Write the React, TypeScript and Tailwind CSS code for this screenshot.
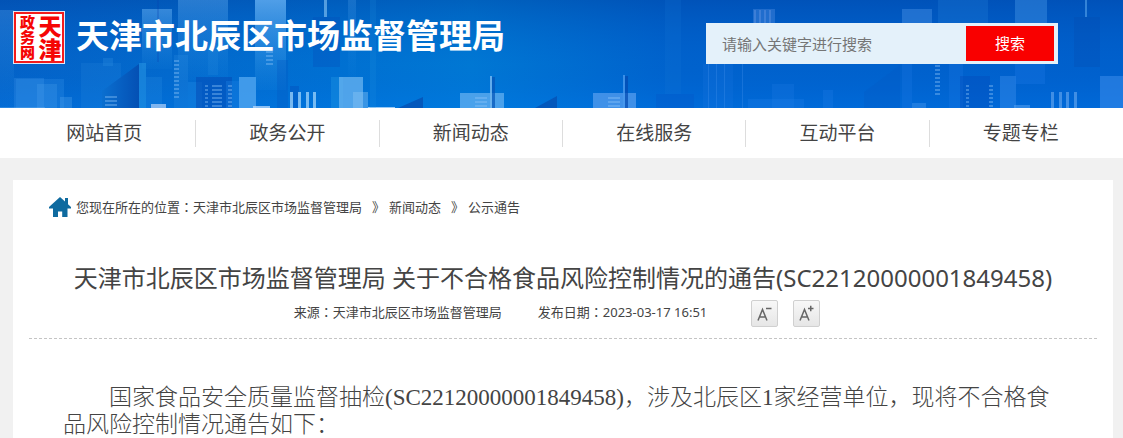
import { useState } from 'react';

const navItems = ['网站首页', '政务公开', '新闻动态', '在线服务', '互动平台', '专题专栏'];

const crumbs = ['天津市北辰区市场监督管理局', '新闻动态', '公示通告'];

// x, y, width, height, fill, opacity
const towers: [number, number, number, number, string, number][] = [
  [0, 10, 14, 98, 'url(#haze)', 0.3],
  [14, 78, 30, 30, '#4da0f0', 0.25],
  [16, 79, 48, 29, '#3d96ec', 0.25],
  [37, 84, 20, 24, '#5fb0f5', 0.2],
  [0, 107, 45, 1, '#7fc0fa', 0.3],
  [60, 97, 12, 11, '#5aa8f0', 0.3],
  [81, 63, 40, 45, '#2f8de0', 0.2],
  [103, 58, 10, 8, '#2f8de0', 0.3],
  [139, 63, 7, 45, '#2ea0e8', 0.45],
  [146, 77, 16, 31, '#2b90e4', 0.25],
  [142, 9, 30, 60, 'url(#haze)', 0.6],
  [157, 0, 2, 62, '#063fae', 0.25],
  [151, 104, 15, 4, '#a8cbf5', 0.75],
  [174, 55, 14, 53, '#3a94e6', 0.2],
  [178, 0, 50, 80, 'url(#haze)', 0.45],
  [188, 82, 14, 26, '#1f86e0', 0.4],
  [196, 77, 36, 31, '#0348b4', 0.5],
  [208, 45, 10, 30, '#2f92e2', 0.2],
  [226, 81, 13, 27, '#1a7ee0', 0.4],
  [239, 77, 17, 31, '#55a9f2', 0.75],
  [253, 106, 17, 2, '#b0d4fa', 0.8],
  [255, 0, 31, 90, 'url(#haze)', 0.9],
  [277, 60, 11, 48, '#0358c4', 0.35],
  [290, 86, 9, 22, '#0348b8', 0.35],
  [324, 0, 3, 17, '#8cc8f5', 0.6],
  [313, 17, 27, 50, '#034cb8', 0.3],
  [331, 77, 12, 31, '#1d96e4', 0.4],
  [339, 77, 24, 31, '#6ab4f0', 0.75],
  [353, 92, 15, 16, '#8cc6f5', 0.4],
  [368, 107, 27, 1, '#bfe0fb', 0.8],
  [348, 0, 8, 77, 'url(#haze)', 0.25],
  [370, 0, 6, 108, '#2b9ce6', 0.15],
  [460, 93, 44, 15, '#6ab4f2', 0.7],
  [490, 76, 2, 32, '#6cb2ee', 0.9],
  [492, 77, 3, 31, '#0454b8', 0.7],
  [593, 93, 43, 15, '#5a9ff0', 0.7],
  [623, 75, 2, 33, '#4a98ec', 0.8],
  [625, 76, 3, 32, '#0348b0', 0.7],
  [656, 94, 38, 14, '#0550c4', 0.25],
  [665, 0, 16, 94, '#1579da', 0.18],
  [703, 64, 30, 44, '#2a80ea', 0.15],
  [753, 9, 22, 15, '#3a80d8', 0.55],
  [772, 84, 22, 24, '#2a80ea', 0.2],
  [748, 99, 56, 9, '#2f88ee', 0.2],
  [823, 90, 10, 18, '#2f88ee', 0.2],
  [902, 9, 30, 15, '#3a86de', 0.55],
  [902, 64, 10, 44, '#1e7ce8', 0.25],
  [912, 103, 14, 5, '#4a98ee', 0.4],
  [938, 0, 50, 23, '#1e78d4', 0.35],
  [949, 64, 14, 44, '#1e7ce8', 0.25],
  [960, 76, 30, 32, '#0348b8', 0.35],
  [1000, 76, 16, 32, '#3f90ee', 0.4],
  [1015, 0, 32, 23, '#3a8cdf', 0.5],
  [1015, 64, 30, 20, '#1e7ce8', 0.3],
  [1014, 105, 16, 3, '#5ea6f2', 0.5],
  [1074, 17, 26, 50, '#0348ac', 0.25],
  [1085, 0, 2, 17, '#4a98e4', 0.7],
  [1100, 76, 23, 32, '#3f90ee', 0.5],
];

// columns of lit windows: x, y, width, rows
const windows: [number, number, number, number][] = [
  [174, 60, 5, 10],
  [205, 85, 3, 6],
  [212, 85, 10, 6],
  [228, 85, 4, 6],
  [266, 51, 7, 4],
  [105, 96, 12, 3],
  [475, 97, 12, 3],
  [608, 97, 12, 3],
  [935, 65, 5, 8],
  [966, 85, 3, 6],
  [989, 85, 4, 6],
];

function Skyline() {
  return (
    <svg
      className="absolute inset-0 h-full w-full"
      viewBox="0 0 1123 108"
      preserveAspectRatio="none"
      aria-hidden="true"
    >
      <defs>
        <linearGradient id="sky" x1="0" x2="1" y1="0" y2="0">
          <stop offset="0" stopColor="#0462c6" />
          <stop offset="0.3" stopColor="#0072d2" />
          <stop offset="0.42" stopColor="#007ad4" />
          <stop offset="0.6" stopColor="#0062cc" />
          <stop offset="1" stopColor="#0060cc" />
        </linearGradient>
        <linearGradient id="shade" x1="0" x2="0" y1="0" y2="1">
          <stop offset="0" stopColor="#003c9c" stopOpacity="0.4" />
          <stop offset="0.6" stopColor="#0060d0" stopOpacity="0.1" />
          <stop offset="1" stopColor="#0078ec" stopOpacity="0.4" />
        </linearGradient>
        <linearGradient id="haze" x1="0" x2="0" y1="0" y2="1">
          <stop offset="0" stopColor="#62aef2" stopOpacity="0.9" />
          <stop offset="1" stopColor="#2f98e8" stopOpacity="0.1" />
        </linearGradient>
        <linearGradient id="roof" x1="0" x2="1" y1="0" y2="0">
          <stop offset="0" stopColor="#0a6fd0" />
          <stop offset="1" stopColor="#0450b4" />
        </linearGradient>
      </defs>
      <rect width="1123" height="108" fill="url(#sky)" />
      <rect width="1123" height="108" fill="url(#shade)" />
      {towers.map(([x, y, w, h, fill, opacity], i) => (
        <rect key={i} x={x} y={y} width={w} height={h} fill={fill} opacity={opacity} />
      ))}
      <path d="M102 108V91L139 64V108Z" fill="url(#roof)" />
      <path d="M398 108L423 97V108Z" fill="#0458bc" />
      <path d="M535 108L557 96V108Z" fill="#0458bc" />
      <path d="M864 108V92L900 65V108Z" fill="#0458c4" opacity="0.3" />
      {windows.map(([x, y, w, rows]) =>
        Array.from({ length: rows }, (_, r) => (
          <rect key={`${x}-${r}`} x={x} y={y + r * 4} width={w} height="2" fill="#8cc4f8" opacity="0.4" />
        ))
      )}
      {[290, 298, 306, 313].map((x) => (
        <rect key={x} x={x} y="92" width="3" height="16" fill="#9fd4fb" opacity="0.75" />
      ))}
      {[1051, 1059, 1066, 1074].map((x) => (
        <rect key={x} x={x} y="92" width="3" height="16" fill="#7fb8f6" opacity="0.5" />
      ))}
      {[754, 759, 764, 769].map((x) => (
        <rect key={x} x={x} y="10" width="2" height="14" fill="#5a90e0" opacity="0.5" />
      ))}
      {[708, 716, 724, 742].map((x) => (
        <rect key={x} x={x} y="64" width="1" height="44" fill="#4a94ee" opacity="0.3" />
      ))}
    </svg>
  );
}

function Seal() {
  return (
    <div className="h-[53px] w-[52px] shrink-0 bg-[#dce8f8] p-px">
      <div className="flex h-full flex-row-reverse items-center justify-center border-2 border-[#f31c1c] bg-white font-black whitespace-nowrap text-[#f50505]">
        <span className="text-[23px] leading-6 [writing-mode:vertical-rl]">天津</span>
        <span className="text-[15px] leading-5 [writing-mode:vertical-rl]">政务网</span>
      </div>
    </div>
  );
}

function HomeIcon() {
  return (
    <svg className="h-5 w-[22px] shrink-0" viewBox="0 0 22 20" fill="#0e6a9f" aria-hidden="true">
      <path d="M11 0L16 4.4V1H19V7.2L22 10V11.5H18.5V20H13.2V14.5H9V20H4V11.5H0V10Z" />
    </svg>
  );
}

// full-width colon, centred in its box
function Colon() {
  return <span className="font-['Noto_Sans_CJK_TC',sans-serif] leading-none">：</span>;
}

function FontSizeButton({ sign, label, onClick }: { sign: '-' | '+'; label: string; onClick: () => void }) {
  return (
    <button
      type="button"
      aria-label={label}
      onClick={onClick}
      className="h-[27px] w-[27px] rounded-xs border border-[#d0d0d0] bg-gradient-to-b from-[#f8f8f8] to-[#e6e6e6]"
    >
      <svg viewBox="0 0 25 25" fill="none" stroke="#666" strokeWidth="1.5" aria-hidden="true">
        <path d="M6 19.5L10.5 8.5L15 19.5M7.5 16H13.5" />
        <path d={sign === '+' ? 'M14 7.5H19.5M16.75 4.75V10.25' : 'M14 7.5H19.5'} />
      </svg>
    </button>
  );
}

export default function App() {
  const [keyword, setKeyword] = useState('');
  const [large, setLarge] = useState(false);

  return (
    <div className="min-h-screen bg-[#f1f1f1] font-['Noto_Sans','Noto_Sans_CJK_SC',sans-serif] text-[#444]">
      {/* Header */}
      <header className="relative h-[108px] overflow-hidden bg-[#0068cc]">
        <Skyline />
        <div className="relative flex items-start justify-between pt-[11px] pr-[65px] pl-[13px]">
          <div className="flex items-start gap-[11px]">
            <Seal />
            <span className="text-[33px] leading-[50px] font-bold whitespace-nowrap text-white">
              天津市北辰区市场监督管理局
            </span>
          </div>
          <form
            className="mt-3 flex h-[41px] w-[352px] items-center bg-[#e4f1fa] pr-1"
            onSubmit={(e) => e.preventDefault()}
          >
            <input
              type="text"
              aria-label="搜索关键字"
              placeholder="请输入关键字进行搜索"
              value={keyword}
              onChange={(e) => setKeyword(e.target.value)}
              className="h-full min-w-0 flex-1 bg-transparent px-4 text-[15px] outline-none placeholder:text-[#757575]"
            />
            <button type="submit" className="h-[35px] w-[88px] bg-[#f90000] text-[15px] text-white">
              搜索
            </button>
          </form>
        </div>
      </header>

      {/* Navigation */}
      <nav className="bg-white pr-[11px] pl-[13px]">
        <ul className="flex h-[50px] items-center">
          {navItems.map((item) => (
            <li key={item} className="flex-1 border-r border-[#ddd] text-center last:border-r-0">
              <a href="#" className="text-[19px] leading-[27px]">
                {item}
              </a>
            </li>
          ))}
        </ul>
      </nav>

      {/* Article */}
      <main className="mt-[22px] mr-[10px] ml-[13px] bg-white px-4">
        <div className="flex h-[54px] items-center pl-5 text-[13px] leading-5">
          <HomeIcon />
          <span className="ml-[5px]">
            您现在所在的位置
            <Colon />
          </span>
          {crumbs.map((crumb, i) => (
            <span key={crumb} className="flex">
              {i > 0 && <span className="mr-1 ml-[10px]">》</span>}
              <a href="#">{crumb}</a>
            </span>
          ))}
        </div>

        <h1 className="mt-6 text-center text-[24px] leading-10">
          天津市北辰区市场监督管理局 关于不合格食品风险控制情况的通告(SC22120000001849458)
        </h1>

        <div className="mt-0.5 flex items-start justify-center border-b border-dashed border-[#c4c4c4] pr-3 pb-[11px] text-[13px] leading-6">
          <span>
            来源
            <Colon />
            天津市北辰区市场监督管理局
          </span>
          <span className="ml-9">
            发布日期
            <Colon />
            2023-03-17 16:51
          </span>
          <div className="ml-11 flex gap-[15px]">
            <FontSizeButton sign="-" label="缩小字体" onClick={() => setLarge(false)} />
            <FontSizeButton sign="+" label="放大字体" onClick={() => setLarge(true)} />
          </div>
        </div>

        <p
          className={`mt-[45px] px-[34px] indent-[2em] font-['Liberation_Serif','Noto_Sans_CJK_SC',serif] font-light ${
            large ? 'text-[26px] leading-8' : 'text-[23px] leading-[27px]'
          }`}
        >
          国家食品安全质量监督抽检(SC22120000001849458)，涉及北辰区1家经营单位，现将不合格食品风险控制情况通告如下：
        </p>
      </main>
    </div>
  );
}
